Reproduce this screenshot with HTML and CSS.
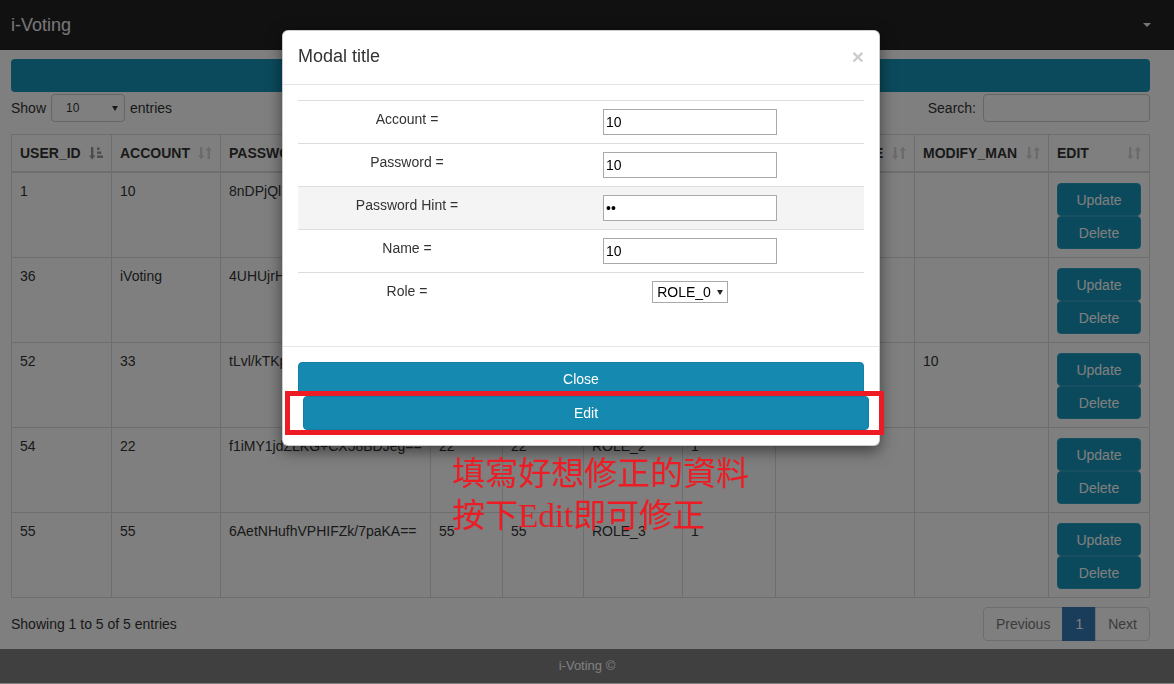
FILE: index.html
```html
<!DOCTYPE html>
<html lang="zh-Hant">
<head>
  <meta charset="UTF-8">
  <meta name="viewport" content="width=device-width, initial-scale=1.0">
  <title>i-Voting</title>
  <link rel="stylesheet" href="styles.css">
</head>
<body>
  <!-- sort glyphs used in the table header -->
  <svg class="sprites" xmlns="http://www.w3.org/2000/svg">
    <symbol id="sort-both" viewBox="0 0 14 14">
      <path d="M2 1h2.4v8.5h2L3.2 13.5 0 9.5h2z M9.6 13h2.4V4.5h2L10.8 0.5 7.6 4.5h2z"/>
    </symbol>
    <symbol id="sort-asc" viewBox="0 0 14 14">
      <path d="M2 1h2.4v8.5h2L3.2 13.5 0 9.5h2z"/>
      <rect x="8" y="1.5" width="2.6" height="2.4"/>
      <rect x="8" y="5.5" width="4.2" height="2.4"/>
      <rect x="8" y="9.5" width="6" height="2.4"/>
    </symbol>
  </svg>

  <nav class="navbar">
    <span class="navbar-brand">i-Voting</span>
    <span class="caret"></span>
  </nav>

  <div class="container">
    <div class="page-bar"></div>

    <div class="dt-top">
      <div class="dt-length">Show <span class="fake-select">10<span class="select-arrow"></span></span> entries</div>
      <div class="dt-search">Search: <input type="text" class="search-input"></div>
    </div>

    <table class="data-table">
      <colgroup>
        <col style="width:100px"><col style="width:109px"><col style="width:210px">
        <col style="width:72px"><col style="width:81px"><col style="width:99px">
        <col style="width:93px"><col style="width:139px"><col style="width:134px"><col>
      </colgroup>
      <thead>
        <tr>
          <th><div class="th-inner">USER_ID<svg class="sort-icon active"><use href="#sort-asc"/></svg></div></th>
          <th><div class="th-inner">ACCOUNT<svg class="sort-icon"><use href="#sort-both"/></svg></div></th>
          <th><div class="th-inner">PASSWORD<svg class="sort-icon"><use href="#sort-both"/></svg></div></th>
          <th><div class="th-inner">HINT<svg class="sort-icon"><use href="#sort-both"/></svg></div></th>
          <th><div class="th-inner">NAME<svg class="sort-icon"><use href="#sort-both"/></svg></div></th>
          <th><div class="th-inner">ROLE<svg class="sort-icon"><use href="#sort-both"/></svg></div></th>
          <th><div class="th-inner">STATE<svg class="sort-icon"><use href="#sort-both"/></svg></div></th>
          <th><div class="th-inner">MODIFY_DATE<svg class="sort-icon"><use href="#sort-both"/></svg></div></th>
          <th><div class="th-inner">MODIFY_MAN<svg class="sort-icon"><use href="#sort-both"/></svg></div></th>
          <th><div class="th-inner">EDIT<svg class="sort-icon"><use href="#sort-both"/></svg></div></th>
        </tr>
      </thead>
      <tbody>
        <tr>
          <td>1</td><td>10</td><td>8nDPjQlE2mWqZ7cR1aHkw==</td><td>10</td><td>10</td><td>ROLE_0</td><td>1</td><td></td><td></td>
          <td><button class="btn btn-row">Update</button><button class="btn btn-row">Delete</button></td>
        </tr>
        <tr>
          <td>36</td><td>iVoting</td><td>4UHUjrHq9sLxT2bN0eKc==</td><td>iv</td><td>iVoting</td><td>ROLE_1</td><td>1</td><td></td><td></td>
          <td><button class="btn btn-row">Update</button><button class="btn btn-row">Delete</button></td>
        </tr>
        <tr>
          <td>52</td><td>33</td><td>tLvl/kTKp3Ze8QwR5mYg==</td><td>33</td><td>33</td><td>ROLE_1</td><td>1</td><td></td><td>10</td>
          <td><button class="btn btn-row">Update</button><button class="btn btn-row">Delete</button></td>
        </tr>
        <tr>
          <td>54</td><td>22</td><td>f1iMY1jdZLKG+CX58BDJeg==</td><td>22</td><td>22</td><td>ROLE_2</td><td>1</td><td></td><td></td>
          <td><button class="btn btn-row">Update</button><button class="btn btn-row">Delete</button></td>
        </tr>
        <tr>
          <td>55</td><td>55</td><td>6AetNHufhVPHIFZk/7paKA==</td><td>55</td><td>55</td><td>ROLE_3</td><td>1</td><td></td><td></td>
          <td><button class="btn btn-row">Update</button><button class="btn btn-row">Delete</button></td>
        </tr>
      </tbody>
    </table>

    <div class="dt-bottom">
      <div class="dt-info">Showing 1 to 5 of 5 entries</div>
      <ul class="pagination">
        <li class="disabled"><a>Previous</a></li>
        <li class="active"><a>1</a></li>
        <li class="disabled"><a>Next</a></li>
      </ul>
    </div>
  </div>

  <footer class="site-footer">i-Voting ©</footer>

  <div class="modal-backdrop"></div>

  <div class="modal-dialog">
    <div class="modal-header">
      <h4 class="modal-title">Modal title</h4>
      <span class="close">×</span>
    </div>
    <div class="modal-body">
      <table class="form-table">
        <colgroup><col style="width:218px"><col></colgroup>
        <tr><td>Account =</td><td><input type="text" class="form-input" value="10"></td></tr>
        <tr><td>Password =</td><td><input type="text" class="form-input" value="10"></td></tr>
        <tr class="row-hover"><td>Password Hint =</td><td><input type="password" class="form-input" value="22"></td></tr>
        <tr><td>Name =</td><td><input type="text" class="form-input" value="10"></td></tr>
        <tr><td>Role =</td><td><span class="role-select">ROLE_0<span class="role-arrow"></span></span></td></tr>
      </table>
    </div>
    <div class="modal-footer">
      <button class="btn btn-modal">Close</button>
      <button class="btn btn-modal btn-shift">Edit</button>
    </div>
  </div>

  <div class="note-box"></div>
  <div class="note-text">填寫好想修正的資料<br>按下Edit即可修正</div>
</body>
</html>
```

FILE: styles.css
```css
body {
  margin: 0;
  font-family: "Liberation Sans", Arial, sans-serif;
  font-size: 14px;
  line-height: 20px;
  color: #333;
  background-color: #fff;
}

.sprites {
  display: none;
}

/* top navigation */
.navbar {
  height: 50px;
  display: flex;
  justify-content: space-between;
  align-items: center;
  padding: 0 23px 0 11px;
  background-color: #222;
}
.navbar-brand {
  font-size: 18px;
  color: #eee;
}
.caret {
  width: 0;
  height: 0;
  border-top: 4px solid #eee;
  border-left: 4px solid transparent;
  border-right: 4px solid transparent;
}

.container {
  padding: 9px 24px 0 11px;
}

.page-bar {
  height: 33px;
  border-radius: 4px;
  background-color: #1694b8;
}

/* datatable controls */
.dt-top {
  display: flex;
  justify-content: space-between;
  align-items: center;
  height: 28px;
  margin-top: 2px;
}
.dt-length,
.dt-search {
  display: flex;
  align-items: center;
}
.fake-select {
  display: inline-flex;
  align-items: center;
  justify-content: space-between;
  box-sizing: border-box;
  width: 74px;
  height: 28px;
  margin: 0 5px;
  padding: 0 6px 0 14px;
  border: 1px solid #ccc;
  border-radius: 4px;
  font-size: 12px;
}
.select-arrow {
  width: 0;
  height: 0;
  border-top: 5px solid #333;
  border-left: 3px solid transparent;
  border-right: 3px solid transparent;
}
.search-input {
  box-sizing: border-box;
  width: 167px;
  height: 28px;
  margin-left: 7px;
  border: 1px solid #ccc;
  border-radius: 4px;
}

/* users table */
.data-table {
  width: 100%;
  margin-top: 12px;
  table-layout: fixed;
  border-collapse: collapse;
}
.data-table th,
.data-table td {
  padding: 8px;
  border: 1px solid #ddd;
  text-align: left;
  vertical-align: top;
  white-space: nowrap;
  overflow: hidden;
}
.data-table th {
  border-bottom-width: 2px;
  font-weight: bold;
}
.th-inner {
  display: flex;
  justify-content: space-between;
  align-items: center;
  gap: 6px;
}
.sort-icon {
  flex: none;
  width: 14px;
  height: 14px;
  fill: #d6d6d6;
}
.sort-icon.active {
  fill: #999;
}

.btn {
  display: block;
  box-sizing: border-box;
  width: 100%;
  font-family: "Liberation Sans", Arial, sans-serif;
  font-size: 14px;
  color: #fff;
  border-radius: 4px;
  cursor: pointer;
}
.btn-row {
  height: 33px;
  background-color: #1694b8;
  border: 1px solid #2b9fc0;
}
.btn-row:first-child {
  margin-top: 2px;
}

.dt-bottom {
  display: flex;
  justify-content: space-between;
  align-items: center;
  margin-top: 9px;
}
.pagination {
  display: flex;
  margin: 0;
  padding: 0;
  list-style: none;
}
.pagination a {
  display: block;
  padding: 6px 12px;
  margin-left: -1px;
  border: 1px solid #ddd;
  color: #337ab7;
}
.pagination .disabled a {
  color: #777;
}
.pagination li:first-child a {
  border-radius: 4px 0 0 4px;
}
.pagination li:last-child a {
  border-radius: 0 4px 4px 0;
}
.pagination .active a {
  background-color: #337ab7;
  border-color: #337ab7;
  color: #fff;
}

.site-footer {
  height: 34px;
  margin-top: 8px;
  line-height: 34px;
  text-align: center;
  font-size: 13px;
  color: #fff;
  background-color: #808080;
}

/* modal */
.modal-backdrop {
  position: fixed;
  inset: 0;
  background-color: rgba(0, 0, 0, 0.5);
}
.modal-dialog {
  position: absolute;
  top: 30px;
  left: 282px;
  width: 598px;
  box-sizing: border-box;
  background-color: #fff;
  border: 1px solid rgba(0, 0, 0, 0.2);
  border-radius: 6px;
  box-shadow: 0 5px 15px rgba(0, 0, 0, 0.5);
}
.modal-header {
  display: flex;
  justify-content: space-between;
  align-items: flex-start;
  padding: 13px 15px 15px;
  border-bottom: 1px solid #e5e5e5;
}
.modal-title {
  margin: 0;
  font-size: 18px;
  font-weight: normal;
  line-height: 25px;
}
.close {
  margin-top: 2px;
  font-size: 21px;
  font-weight: bold;
  line-height: 1;
  color: #ccc;
}
.modal-body {
  padding: 15px;
}
.form-table {
  width: 100%;
  margin-bottom: 20px;
  table-layout: fixed;
  border-collapse: collapse;
}
.form-table td {
  padding: 8px;
  border-top: 1px solid #ddd;
  text-align: center;
  vertical-align: top;
}
.form-table .row-hover td {
  background-color: #f4f4f4;
}
.form-input {
  box-sizing: border-box;
  width: 174px;
  height: 26px;
  margin: 0;
  padding: 1px 2px;
  border: 1px solid #a9a9a9;
  border-radius: 0;
  font-family: "Liberation Sans", Arial, sans-serif;
  font-size: 14px;
  color: #000;
  background-color: #fff;
  vertical-align: top;
}
.role-select {
  display: inline-flex;
  align-items: center;
  gap: 6px;
  height: 20px;
  padding: 0 4px;
  border: 1px solid #a9a9a9;
  background-color: #fff;
  color: #000;
}
.role-arrow {
  width: 0;
  height: 0;
  border-top: 5px solid #222;
  border-left: 3px solid transparent;
  border-right: 3px solid transparent;
}
.modal-footer {
  padding: 15px;
  border-top: 1px solid #e5e5e5;
}
.btn-modal {
  height: 34px;
  background-color: #1589b0;
  border: 1px solid #1380a5;
}
.btn-shift {
  margin-left: 5px;
}

/* red call-out drawn over the dialog */
.note-box {
  position: absolute;
  top: 391px;
  left: 285px;
  width: 599px;
  height: 44px;
  box-sizing: border-box;
  border: 5px solid #ed1c24;
}
.note-text {
  position: absolute;
  top: 453px;
  left: 452px;
  font-family: "Liberation Serif", "Noto Sans CJK TC", serif;
  font-size: 33px;
  line-height: 42px;
  color: #ed1c24;
}
```
